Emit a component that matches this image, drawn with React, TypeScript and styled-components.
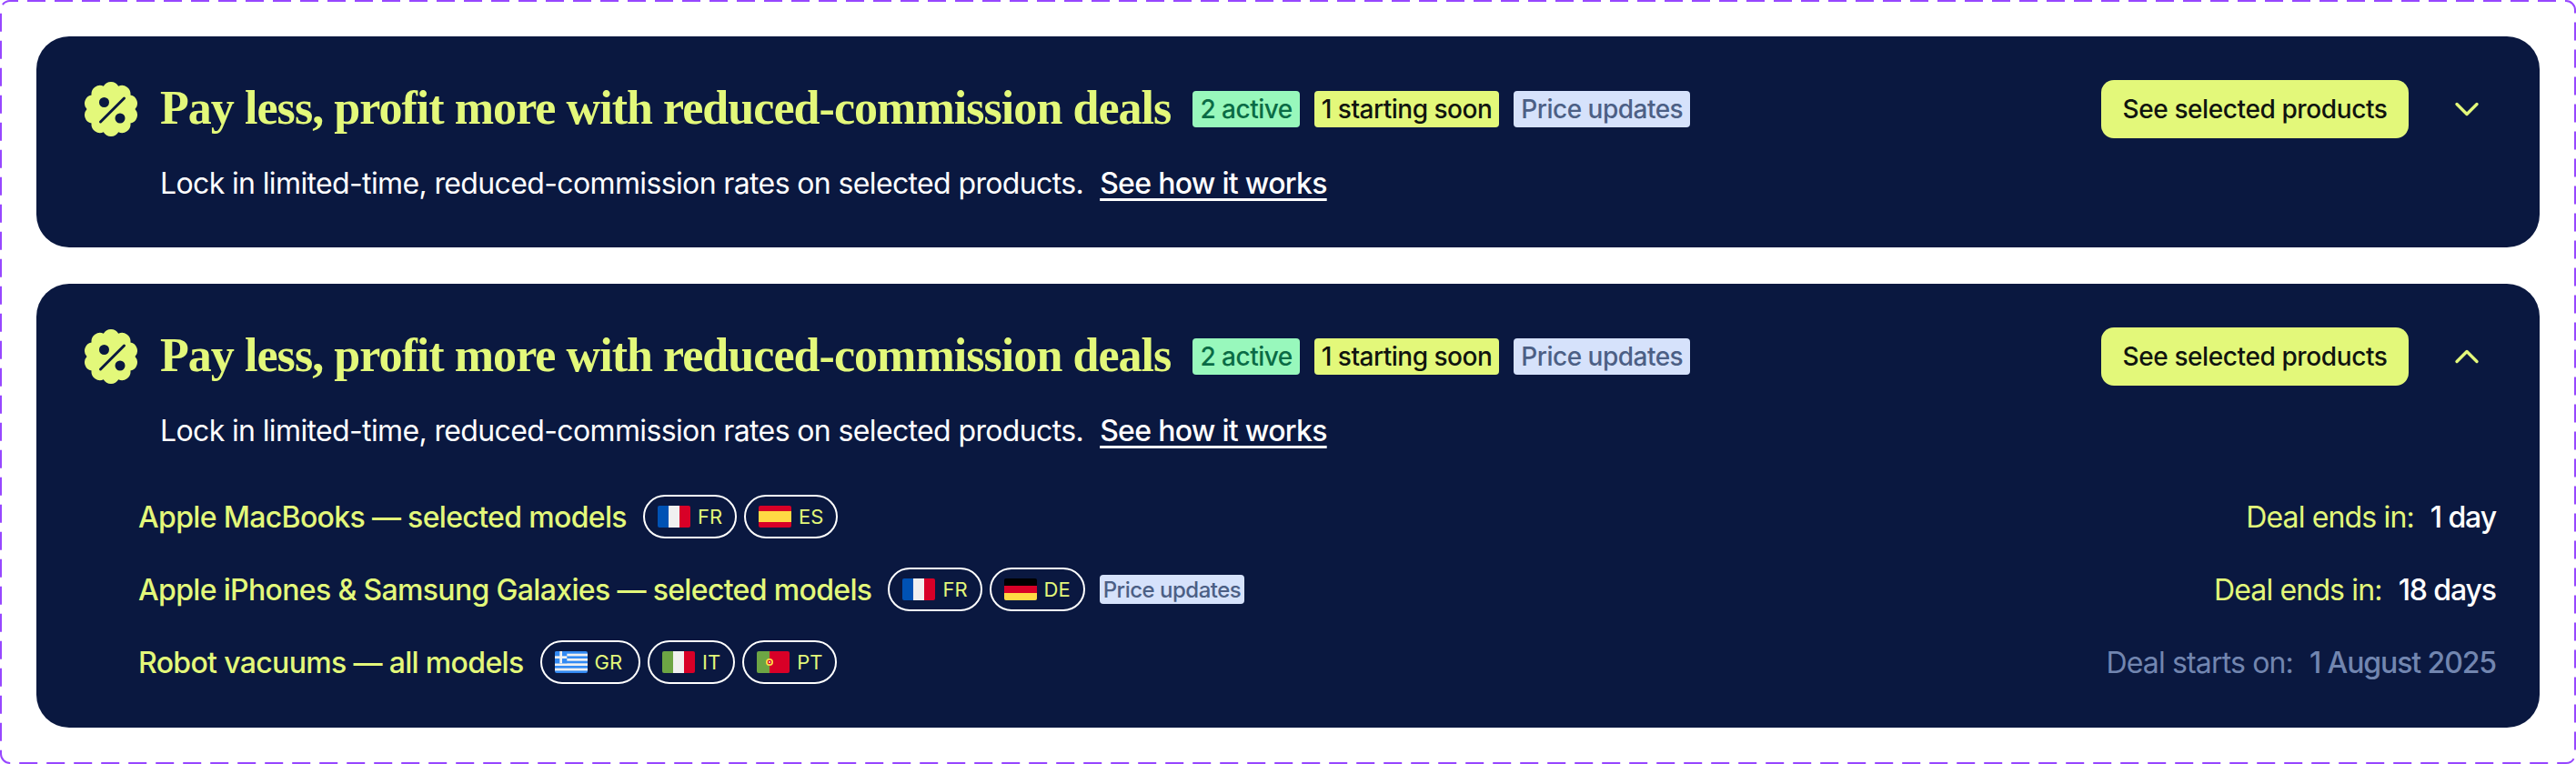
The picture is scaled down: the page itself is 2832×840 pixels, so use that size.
import styled, { createGlobalStyle } from "styled-components";

const GlobalStyle = createGlobalStyle`
  html, body {
    margin: 0;
    padding: 0;
    background: #fff;
  }
`;

const lime = "#e3f87a";
const navy = "#0a1840";

const Frame = styled.div`
  position: relative;
  box-sizing: border-box;
  width: 2832px;
  height: 840px;
  padding: 40px;
  display: flex;
  flex-direction: column;
  gap: 40px;
  font-family: "Inter", "Liberation Sans", sans-serif;
`;

const DashedOutline = styled.svg`
  position: absolute;
  inset: 0;
  pointer-events: none;
`;

const Card = styled.section`
  background: ${navy};
  border-radius: 36px;
  padding: 48px 48px 0 52px;
`;

const Header = styled.div`
  display: flex;
  align-items: center;
  height: 64px;
`;

const TitleIcon = styled.svg`
  flex: none;
  width: 60px;
  height: 60px;
  margin-right: 24px;
`;

const Title = styled.h2`
  margin: 0 24px 0 0;
  padding-bottom: 3px;
  font-family: "Liberation Serif", serif;
  font-size: 52px;
  font-weight: 700;
  letter-spacing: -0.95px;
  color: ${lime};
  white-space: nowrap;
`;

const Badges = styled.div`
  display: flex;
  gap: 16px;
  flex: 1;
`;

const tones = {
  green: { bg: "#98f8bc", fg: "#0a6b45" },
  lime: { bg: lime, fg: "#10140f" },
  blue: { bg: "#d6e2fb", fg: "#4c5f85" },
};

const Badge = styled.span<{ $tone: keyof typeof tones; $small?: boolean }>`
  display: inline-flex;
  align-items: center;
  height: ${(p) => (p.$small ? 32 : 40)}px;
  padding: 0 ${(p) => (p.$small ? 4 : 8)}px;
  border-radius: 4px;
  font-size: ${(p) => (p.$small ? 24 : 28)}px;
  font-weight: 500;
  letter-spacing: -0.5px;
  white-space: nowrap;
  background: ${(p) => tones[p.$tone].bg};
  color: ${(p) => tones[p.$tone].fg};
`;

const CtaButton = styled.button`
  height: 64px;
  width: 338px;
  border: 0;
  border-radius: 14px;
  background: ${lime};
  color: #10140f;
  font-family: inherit;
  font-size: 28px;
  font-weight: 500;
  letter-spacing: -0.4px;
`;

const Toggle = styled.button`
  display: flex;
  align-items: center;
  justify-content: center;
  width: 64px;
  height: 64px;
  margin-left: 32px;
  padding: 0;
  border: 0;
  background: none;
`;

const Sub = styled.p`
  margin: 30px 0 0;
  padding: 0 0 50px 84px;
  font-size: 32px;
  line-height: 40px;
  letter-spacing: -0.63px;
  color: #fff;
`;

const SubLink = styled.a`
  margin-left: 18px;
  color: #fff;
  font-weight: 500;
  letter-spacing: -0.7px;
  text-decoration: underline;
  text-decoration-thickness: 3px;
  text-underline-offset: 5px;
`;

const Rows = styled.div`
  display: flex;
  flex-direction: column;
  gap: 32px;
  padding: 0 0 48px 60px;
`;

const Row = styled.div`
  display: flex;
  align-items: center;
  height: 48px;
`;

const RowLabel = styled.span`
  margin-right: 18px;
  font-size: 32px;
  font-weight: 500;
  letter-spacing: -0.66px;
  color: ${lime};
  white-space: nowrap;
`;

const Pills = styled.div`
  display: flex;
  gap: 8px;
`;

const Pill = styled.span<{ $wide?: boolean }>`
  display: inline-flex;
  align-items: center;
  gap: 8px;
  box-sizing: border-box;
  height: 48px;
  padding: 0 ${(p) => (p.$wide ? 18 : 14)}px 0 14px;
  border: 2px solid #fff;
  border-radius: 24px;
  font-size: 22px;
  color: ${lime};
`;

const FlagSvg = styled.svg`
  display: block;
  width: 36px;
  height: 24px;
  border-radius: 2px;
`;

const Note = styled.div`
  margin-left: 16px;
`;

const Deal = styled.div<{ $muted?: boolean }>`
  margin-left: auto;
  display: flex;
  gap: 18px;
  font-size: 32px;
  letter-spacing: -0.85px;
  color: ${(p) => (p.$muted ? "#7286b0" : lime)};
  white-space: nowrap;
`;

const DealValue = styled.strong<{ $muted?: boolean }>`
  font-weight: 500;
  letter-spacing: -1.1px;
  color: ${(p) => (p.$muted ? "#7286b0" : "#fff")};
`;

// scalloped seal outline, 10 bumps with one at the top
function sealPath() {
  const n = 10;
  const r = 26.5;
  const point = (i: number) => {
    const a = (i / n) * Math.PI * 2 - Math.PI / 2 + Math.PI / n;
    return `${(30 + r * Math.cos(a)).toFixed(2)} ${(30 + r * Math.sin(a)).toFixed(2)}`;
  };
  let d = `M${point(0)}`;
  for (let i = 1; i <= n; i++) {
    d += `A9.4 9.4 0 0 1 ${point(i)}`;
  }
  return d + "Z";
}

function SealIcon() {
  return (
    <TitleIcon viewBox="0 0 60 60">
      <path d={sealPath()} fill={lime} />
      <circle cx="22.5" cy="22.5" r="5.5" fill={navy} />
      <circle cx="40" cy="40" r="5.5" fill={navy} />
      <path d="M18.5 44 44.5 18" stroke={navy} strokeWidth="3" strokeLinecap="round" />
    </TitleIcon>
  );
}

function Chevron({ up }: { up?: boolean }) {
  return (
    <svg width="28" height="18" viewBox="0 0 28 18" fill="none">
      <path
        d={up ? "M3 14.5 14 3.5l11 11" : "M3 3.5l11 11L25 3.5"}
        stroke={lime}
        strokeWidth="3.4"
        strokeLinecap="round"
        strokeLinejoin="round"
      />
    </svg>
  );
}

const flagArt: Record<string, React.ReactNode> = {
  FR: (
    <>
      <rect width="12" height="24" fill="#0052b4" />
      <rect x="12" width="12" height="24" fill="#f0f0f0" />
      <rect x="24" width="12" height="24" fill="#d80027" />
    </>
  ),
  ES: (
    <>
      <rect width="36" height="24" fill="#d80027" />
      <rect y="6" width="36" height="12" fill="#ffda44" />
    </>
  ),
  DE: (
    <>
      <rect width="36" height="8" fill="#000" />
      <rect y="8" width="36" height="8" fill="#d80027" />
      <rect y="16" width="36" height="8" fill="#ffda44" />
    </>
  ),
  IT: (
    <>
      <rect width="12" height="24" fill="#6da544" />
      <rect x="12" width="12" height="24" fill="#f0f0f0" />
      <rect x="24" width="12" height="24" fill="#d80027" />
    </>
  ),
  PT: (
    <>
      <rect width="14" height="24" fill="#6da544" />
      <rect x="14" width="22" height="24" fill="#d80027" />
      <circle cx="14" cy="12" r="4" fill="#ffda44" />
      <circle cx="14" cy="12" r="2.2" fill="#d80027" />
      <circle cx="14" cy="12" r="1" fill="#f0f0f0" />
    </>
  ),
  GR: (
    <>
      <rect width="36" height="24" fill="#338af3" />
      {[2.7, 8, 13.3, 18.7].map((y) => (
        <rect key={y} y={y} width="36" height="2.7" fill="#f0f0f0" />
      ))}
      <rect width="13.3" height="13.3" fill="#338af3" />
      <rect x="5.3" width="2.7" height="13.3" fill="#f0f0f0" />
      <rect y="5.3" width="13.3" height="2.7" fill="#f0f0f0" />
    </>
  ),
};

function CountryPill({ code }: { code: string }) {
  return (
    <Pill $wide={code === "GR"}>
      <FlagSvg viewBox="0 0 36 24">{flagArt[code]}</FlagSvg>
      {code}
    </Pill>
  );
}

function CardTop({ open }: { open?: boolean }) {
  return (
    <>
      <Header>
        <SealIcon />
        <Title>Pay less, profit more with reduced-commission deals</Title>
        <Badges>
          <Badge $tone="green">2 active</Badge>
          <Badge $tone="lime">1 starting soon</Badge>
          <Badge $tone="blue">Price updates</Badge>
        </Badges>
        <CtaButton>See selected products</CtaButton>
        <Toggle>
          <Chevron up={open} />
        </Toggle>
      </Header>
      <Sub>
        Lock in limited-time, reduced-commission rates on selected products.
        <SubLink>See how it works</SubLink>
      </Sub>
    </>
  );
}

const deals = [
  { name: "Apple MacBooks — selected models", codes: ["FR", "ES"], label: "Deal ends in:", value: "1 day" },
  {
    name: "Apple iPhones & Samsung Galaxies — selected models",
    codes: ["FR", "DE"],
    note: true,
    label: "Deal ends in:",
    value: "18 days",
  },
  {
    name: "Robot vacuums — all models",
    codes: ["GR", "IT", "PT"],
    label: "Deal starts on:",
    value: "1 August 2025",
    muted: true,
  },
];

function App() {
  return (
    <Frame>
      <GlobalStyle />
      <Card>
        <CardTop />
      </Card>
      <Card>
        <CardTop open />
        <Rows>
          {deals.map((d) => (
            <Row key={d.name}>
              <RowLabel>{d.name}</RowLabel>
              <Pills>
                {d.codes.map((c) => (
                  <CountryPill key={c} code={c} />
                ))}
              </Pills>
              {d.note ? (
                <Note>
                  <Badge $tone="blue" $small>
                    Price updates
                  </Badge>
                </Note>
              ) : null}
              <Deal $muted={d.muted}>
                <span>{d.label}</span>
                <DealValue $muted={d.muted}>{d.value}</DealValue>
              </Deal>
            </Row>
          ))}
        </Rows>
      </Card>
      <DashedOutline width="2832" height="840" fill="none">
        <rect
          x="1"
          y="1"
          width="2830"
          height="838"
          rx="10"
          stroke="#9747ff"
          strokeWidth="2"
          strokeDasharray="20 10"
          strokeDashoffset="11"
        />
      </DashedOutline>
    </Frame>
  );
}

export default App;
